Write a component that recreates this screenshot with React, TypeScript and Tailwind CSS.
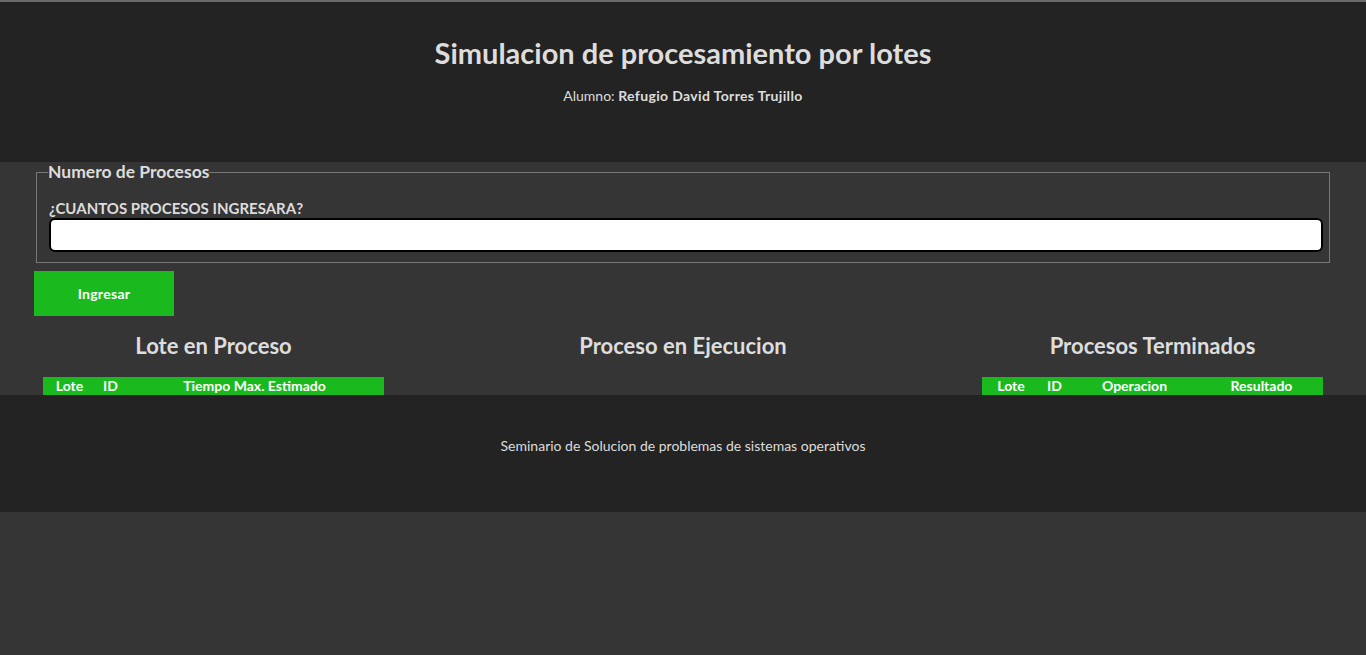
const headCell = "h-[18px] text-[14px] font-bold text-white text-center leading-[17px]";

function LoteTable() {
  return (
    <div className="flex w-[341px] bg-[#1aba1e]">
      <div className={`${headCell} w-[53px]`}>Lote</div>
      <div className={`${headCell} w-[29px]`}>ID</div>
      <div className={`${headCell} flex-1`}>Tiempo Max. Estimado</div>
    </div>
  );
}

function TerminadosTable() {
  return (
    <div className="flex w-[341px] bg-[#1aba1e]">
      <div className={`${headCell} w-[58px]`}>Lote</div>
      <div className={`${headCell} w-[29px]`}>ID</div>
      <div className={`${headCell} w-[131px]`}>Operacion</div>
      <div className={`${headCell} flex-1`}>Resultado</div>
    </div>
  );
}

export default function App() {
  return (
    <div className="min-h-screen bg-[#353535] font-['Lato','Noto_Sans',sans-serif] text-[#dddddd]">
      <header className="h-[162px] border-t-2 border-[#6b6b6b] bg-[#232323] pt-[34px] text-center">
        <h1 className="text-[29px] font-bold leading-[34px]">Simulacion de procesamiento por lotes</h1>
        <p className="mt-[17px] text-[14px] leading-[17px]">
          Alumno: <b className="tracking-[0.35px]">Refugio David Torres Trujillo</b>
        </p>
      </header>

      <main>
        <fieldset className="mx-[36px] border border-[#777777] pl-[12px] pr-[6px] pb-[10px]">
          <legend className="-ml-[1px] text-[17.5px] font-bold leading-[20px]">Numero de Procesos</legend>
          <label className="mt-[18px] block text-[15px] font-bold leading-[16px]">
            ¿CUANTOS PROCESOS INGRESARA?
          </label>
          <input
            type="text"
            className="mt-[2px] block h-[34px] w-full rounded-md border-2 border-black bg-white px-2 text-black outline-none"
          />
        </fieldset>

        <button className="ml-[34px] mt-[8px] h-[45px] w-[140px] bg-[#1aba1e] text-[14px] font-bold tracking-[0.3px] text-white">
          Ingresar
        </button>

        <section className="mt-[15px] flex justify-between px-[43px]">
          <div className="flex w-[341px] flex-col items-center">
            <h2 className="text-[22px] font-bold leading-[29px]">Lote en Proceso</h2>
            <div className="mt-[17px]">
              <LoteTable />
            </div>
          </div>
          <div className="flex flex-1 flex-col items-center">
            <h2 className="text-[22px] font-bold leading-[29px]">Proceso en Ejecucion</h2>
          </div>
          <div className="flex w-[341px] flex-col items-center">
            <h2 className="text-[22px] font-bold leading-[29px]">Procesos Terminados</h2>
            <div className="mt-[17px]">
              <TerminadosTable />
            </div>
          </div>
        </section>
      </main>

      <footer className="h-[117px] bg-[#232323] pt-[42px] text-center text-[14px] leading-[17px]">
        Seminario de Solucion de problemas de sistemas operativos
      </footer>
    </div>
  );
}
